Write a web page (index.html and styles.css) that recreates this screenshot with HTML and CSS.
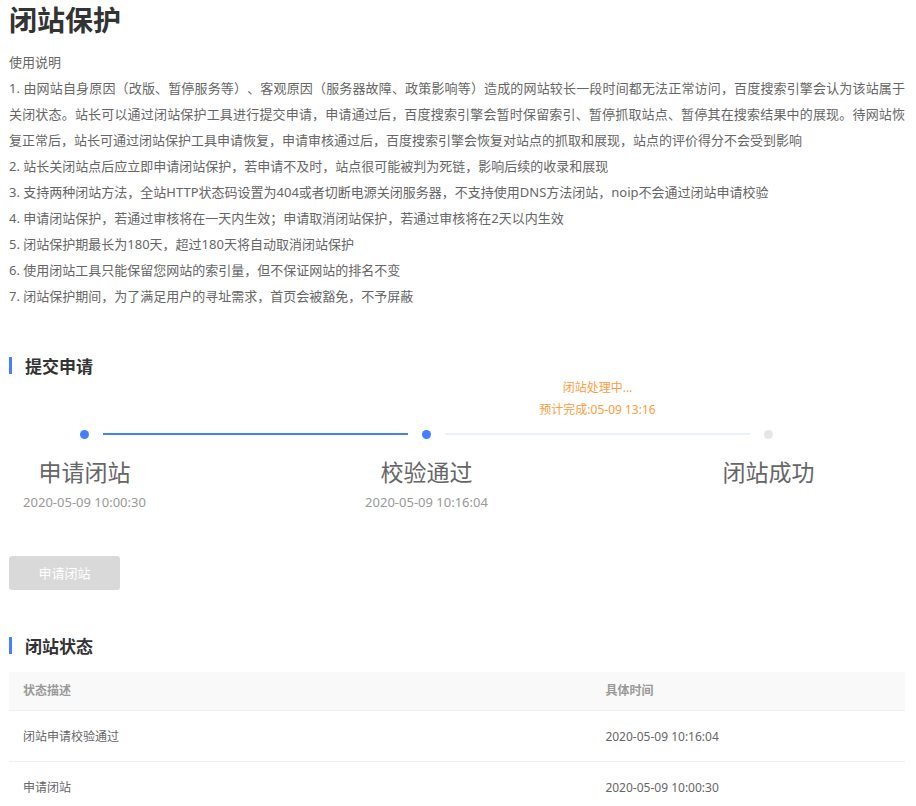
FILE: index.html
```html
<!DOCTYPE html>
<html lang="zh-CN">
<head>
<meta charset="utf-8">
<meta name="viewport" content="width=device-width, initial-scale=1">
<title>闭站保护</title>
<link rel="stylesheet" href="styles.css">
</head>
<body>
<main class="page">
  <h1 class="page-title">闭站保护</h1>

  <section class="guide">
    <p>使用说明</p>
    <p>1. 由网站自身原因（改版、暂停服务等）、客观原因（服务器故障、政策影响等）造成的网站较长一段时间都无法正常访问，百度搜索引擎会认为该站属于关闭状态。站长可以通过闭站保护工具进行提交申请，申请通过后，百度搜索引擎会暂时保留索引、暂停抓取站点、暂停其在搜索结果中的展现。待网站恢复正常后，站长可通过闭站保护工具申请恢复，申请审核通过后，百度搜索引擎会恢复对站点的抓取和展现，站点的评价得分不会受到影响</p>
    <p>2. 站长关闭站点后应立即申请闭站保护，若申请不及时，站点很可能被判为死链，影响后续的收录和展现</p>
    <p>3. 支持两种闭站方法，全站HTTP状态码设置为404或者切断电源关闭服务器，不支持使用DNS方法闭站，noip不会通过闭站申请校验</p>
    <p>4. 申请闭站保护，若通过审核将在一天内生效；申请取消闭站保护，若通过审核将在2天以内生效</p>
    <p>5. 闭站保护期最长为180天，超过180天将自动取消闭站保护</p>
    <p>6. 使用闭站工具只能保留您网站的索引量，但不保证网站的排名不变</p>
    <p>7. 闭站保护期间，为了满足用户的寻址需求，首页会被豁免，不予屏蔽</p>
  </section>

  <section class="apply">
    <h2 class="section-title">提交申请</h2>
    <div class="steps">
      <div class="step">
        <span class="dot dot-done"></span>
        <span class="step-name">申请闭站</span>
        <time class="step-time">2020-05-09 10:00:30</time>
      </div>
      <div class="link">
        <div class="note"></div>
        <div class="line line-done"></div>
      </div>
      <div class="step">
        <span class="dot dot-done"></span>
        <span class="step-name">校验通过</span>
        <time class="step-time">2020-05-09 10:16:04</time>
      </div>
      <div class="link">
        <div class="note">闭站处理中...<br>预计完成:05-09 13:16</div>
        <div class="line"></div>
      </div>
      <div class="step">
        <span class="dot"></span>
        <span class="step-name">闭站成功</span>
      </div>
    </div>
    <button class="submit" type="button" disabled>申请闭站</button>
  </section>

  <section class="status">
    <h2 class="section-title">闭站状态</h2>
    <table class="records">
      <thead>
        <tr><th scope="col" class="col-state">状态描述</th><th scope="col">具体时间</th></tr>
      </thead>
      <tbody>
        <tr><td>闭站申请校验通过</td><td>2020-05-09 10:16:04</td></tr>
        <tr><td>申请闭站</td><td>2020-05-09 10:00:30</td></tr>
      </tbody>
    </table>
  </section>
</main>
</body>
</html>
```

FILE: styles.css
```css
* {
  box-sizing: border-box;
}

body {
  margin: 0;
  background: #fff;
  color: #666;
  font-family: "Noto Sans", "Noto Sans CJK SC", sans-serif;
  font-size: 13px;
  line-height: 26px;
  text-spacing-trim: space-all;
}

.page {
  padding: 0 11px 0 9px;
}

.page-title {
  margin: 0 0 9px;
  color: #333;
  font-size: 28px;
  font-weight: 700;
  line-height: 40px;
}

.guide p {
  margin: 0;
  text-align: justify;
}

.apply {
  margin-top: 48px;
}

.section-title {
  display: flex;
  align-items: flex-start;
  margin: 0;
  color: #333;
  font-size: 17px;
  font-weight: 700;
  line-height: 20px;
}

.section-title::before {
  content: "";
  width: 3px;
  height: 17px;
  margin-right: 13px;
  background: #4280ff;
}

.steps {
  display: grid;
  grid-template-columns: 151px 1fr 151px 1fr 151px;
  margin-right: 61px;
}

.step {
  display: flex;
  flex-direction: column;
  align-items: center;
  padding-top: 53px;
}

.dot {
  width: 9px;
  height: 9px;
  border-radius: 50%;
  background: #e6e6e6;
}

.dot-done {
  background: #4280ff;
}

.step-name {
  margin-top: 15px;
  font-size: 23px;
  line-height: 36px;
}

.step-time {
  color: #999;
  line-height: 24px;
}

/* The connector reaches past its column towards the dots. */
.link {
  margin: 0 -57px;
}

.note {
  height: 44px;
  margin-bottom: 12px;
  color: #ff9d3c;
  font-size: 12px;
  line-height: 22px;
  text-align: center;
}

.line {
  height: 2px;
  background: #ebefff;
}

.line-done {
  background: #4280ff;
}

.submit {
  display: block;
  min-width: 111px;
  height: 34px;
  margin-top: 42px;
  padding: 0 29px;
  border: 0;
  border-radius: 3px;
  background: #d9d9d9;
  color: #fff;
  font: inherit;
}

.status {
  margin-top: 47px;
}

.records {
  width: 100%;
  margin-top: 15px;
  border-collapse: separate;
  border-spacing: 0;
  font-size: 12px;
  line-height: 20px;
  text-align: left;
}

.records th {
  height: 39px;
  padding: 0 14px;
  border-bottom: 1px solid #eee;
  background: #f9f9f9;
  color: #999;
  font-weight: 700;
}

.records td {
  height: 51px;
  padding: 2px 14px 0;
  border-bottom: 1px solid #eee;
}

.col-state {
  width: 65%;
}
```
